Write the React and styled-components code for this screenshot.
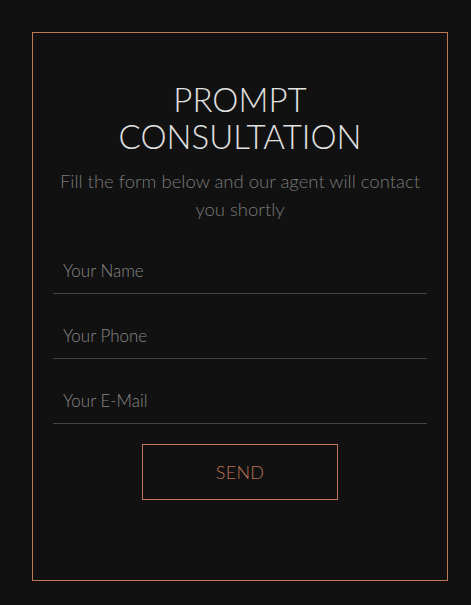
import React from "react";
import styled, { createGlobalStyle } from "styled-components";

const Global = createGlobalStyle`
  html, body { margin: 0; padding: 0; background: #111111; }
  * { box-sizing: border-box; }
`;

const Page = styled.div`
  padding: 32px 24px 24px 32px;
  min-height: 605px;
  background: #111111;
`;

const Card = styled.form`
  width: 416px;
  border: 1px solid #c07853;
  padding: 48px 20px 80px;
  display: flex;
  flex-direction: column;
  align-items: stretch;
`;

const Title = styled.h1`
  margin: 0;
  font-family: "Lato", "Open Sans", sans-serif;
  font-weight: 300;
  font-size: 33px;
  line-height: 37px;
  color: #e2e2e2;
  text-align: center;
  text-transform: uppercase;
`;

const Subtitle = styled.p`
  margin: 12px 0 6px;
  padding: 0 4px;
  font-family: "Lato", "Open Sans", sans-serif;
  font-weight: 300;
  font-size: 18.5px;
  line-height: 28px;
  color: #7a7a7a;
  text-align: center;
`;

const Field = styled.input`
  display: block;
  width: 100%;
  height: 65px;
  padding: 31px 10px 12px;
  border: none;
  border-bottom: 1px solid #444444;
  background: transparent;
  font-family: "Lato", "Open Sans", sans-serif;
  font-weight: 300;
  font-size: 17px;
  line-height: 20px;
  color: #cccccc;
  outline: none;
  &::placeholder { color: #878787; }
`;

const Send = styled.button`
  align-self: center;
  margin-top: 20px;
  width: 196px;
  height: 56px;
  padding: 0;
  border: 1px solid #c07853;
  background: transparent;
  color: #b97351;
  font-family: "Lato", "Open Sans", sans-serif;
  font-weight: 300;
  font-size: 18px;
  letter-spacing: 0.3px;
  cursor: pointer;
`;

export default function App() {
  return (
    <>
      <Global />
      <Page>
        <Card onSubmit={(e) => e.preventDefault()}>
          <Title>Prompt<br />Consultation</Title>
          <Subtitle>Fill the form below and our agent will contact you shortly</Subtitle>
          <Field placeholder="Your Name" />
          <Field placeholder="Your Phone" />
          <Field placeholder="Your E-Mail" />
          <Send type="submit">SEND</Send>
        </Card>
      </Page>
    </>
  );
}
